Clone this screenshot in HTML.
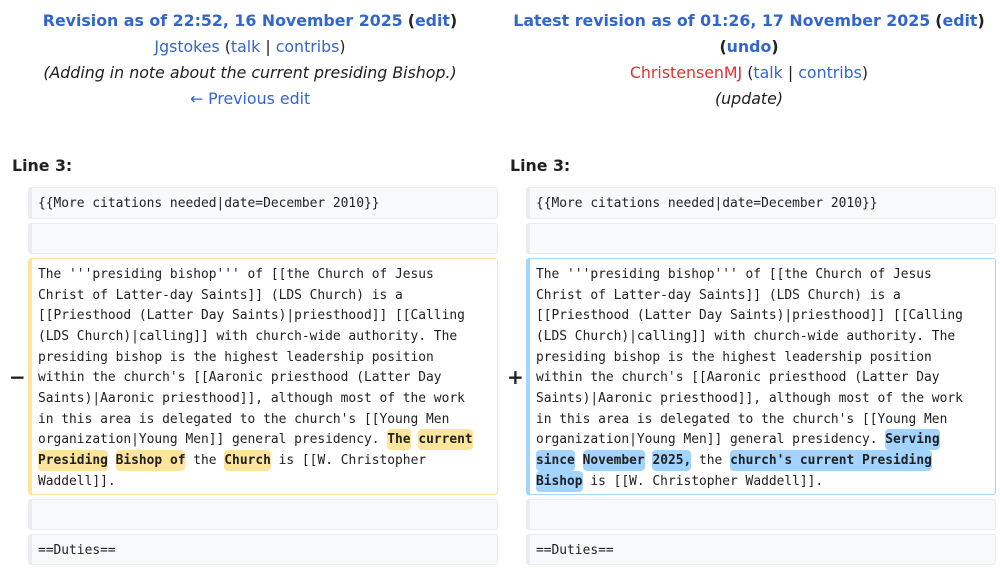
<!DOCTYPE html>
<html><head><meta charset="utf-8"><style>
body{margin:0;width:1000px;height:568px;background:#fff;font-family:"DejaVu Sans","Liberation Sans",sans-serif;color:#202122;position:relative;overflow:hidden}
.hdr{position:absolute;top:8px;width:500px;text-align:center;font-size:15.8px;line-height:26px}
a{color:#3366cc;text-decoration:none}
.b{font-weight:bold}
.i{font-style:italic}
.ln{position:absolute;top:156px;font-weight:bold;font-size:15.8px}
.box{position:absolute;box-sizing:border-box;background:#f8f9fa;border:1px solid #eaecf0;border-left:4px solid #eaecf0;border-radius:3px;font-family:"DejaVu Sans Mono","Liberation Mono",monospace;font-size:12.9px;line-height:20.65px;padding:6px 6px 4px;white-space:pre;color:#202122}
.del{background:#fff;border-color:#ffe49c}
.add{background:#fff;border-color:#a3d3ff}
.d{background:#ffe49c;font-weight:bold;border-radius:4px;padding:3px 0}
.a{background:#a3d3ff;font-weight:bold;border-radius:4px;padding:3px 0}
.mk{position:absolute;font-size:20px;font-weight:bold}
</style></head><body>
<div class="hdr" style="left:0"><a class="b">Revision as of 22:52, 16 November 2025</a> <span class="b">(<a>edit</a>)</span><br><a>Jgstokes</a> (<a>talk</a> | <a>contribs</a>)<br><span class="i">(Adding in note about the current presiding Bishop.)</span><br><a>← Previous edit</a></div>
<div class="hdr" style="left:499px"><a class="b">Latest revision as of 01:26, 17 November 2025</a> <span class="b">(<a>edit</a>)</span><br><span class="b">(<a>undo</a>)</span><br><a style="color:#d33">ChristensenMJ</a> (<a>talk</a> | <a>contribs</a>)<br><span class="i">(update)</span></div>
<div class="ln" style="left:12px">Line 3:</div>
<div class="ln" style="left:510px">Line 3:</div>

<div class="box" style="left:28px;top:187px;width:470px;height:32px">{{More citations needed|date=December 2010}}</div>
<div class="box" style="left:28px;top:223px;width:470px;height:31px"></div>
<div class="box del" style="left:28px;top:258px;width:470px;height:237px">The '''presiding bishop''' of [[the Church of Jesus
Christ of Latter-day Saints]] (LDS Church) is a
[[Priesthood (Latter Day Saints)|priesthood]] [[Calling
(LDS Church)|calling]] with church-wide authority. The
presiding bishop is the highest leadership position
within the church's [[Aaronic priesthood (Latter Day
Saints)|Aaronic priesthood]], although most of the work
in this area is delegated to the church's [[Young Men
organization|Young Men]] general presidency. <span class="d">The</span> <span class="d">current</span>
<span class="d">Presiding</span> <span class="d">Bishop of</span> the <span class="d">Church</span> is [[W. Christopher
Waddell]].</div>
<div class="box" style="left:28px;top:499px;width:470px;height:31px"></div>
<div class="box" style="left:28px;top:534px;width:470px;height:31px">==Duties==</div>
<div class="mk" style="left:9px;top:365px">−</div>

<div class="box" style="left:526px;top:187px;width:470px;height:32px">{{More citations needed|date=December 2010}}</div>
<div class="box" style="left:526px;top:223px;width:470px;height:31px"></div>
<div class="box add" style="left:526px;top:258px;width:470px;height:237px">The '''presiding bishop''' of [[the Church of Jesus
Christ of Latter-day Saints]] (LDS Church) is a
[[Priesthood (Latter Day Saints)|priesthood]] [[Calling
(LDS Church)|calling]] with church-wide authority. The
presiding bishop is the highest leadership position
within the church's [[Aaronic priesthood (Latter Day
Saints)|Aaronic priesthood]], although most of the work
in this area is delegated to the church's [[Young Men
organization|Young Men]] general presidency. <span class="a">Serving</span>
<span class="a">since</span> <span class="a">November</span> <span class="a">2025,</span> the <span class="a">church's current Presiding</span>
<span class="a">Bishop</span> is [[W. Christopher Waddell]].</div>
<div class="box" style="left:526px;top:499px;width:470px;height:31px"></div>
<div class="box" style="left:526px;top:534px;width:470px;height:31px">==Duties==</div>
<div class="mk" style="left:507px;top:365px">+</div>
</body></html>
